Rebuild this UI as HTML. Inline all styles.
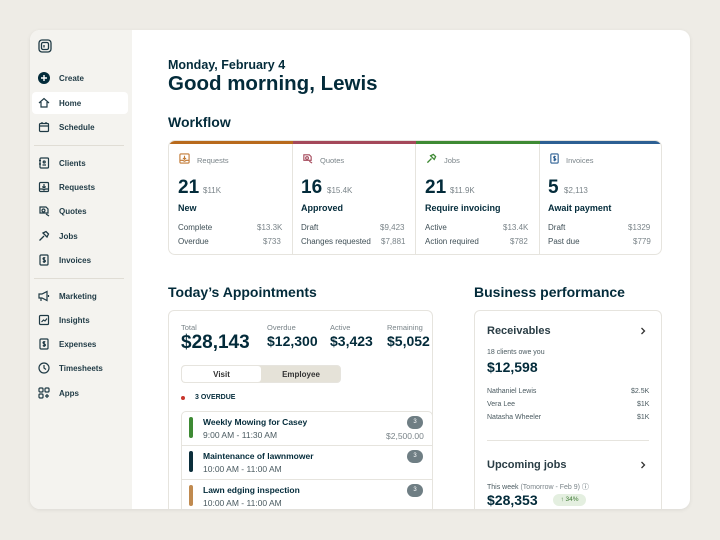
<!DOCTYPE html>
<html><head><meta charset="utf-8"><style>
*{margin:0;padding:0;box-sizing:border-box}
body{width:720px;height:540px;background:#eeece6;font-family:"Liberation Sans",sans-serif;color:#032b3a;position:relative;overflow:hidden}
.a{position:absolute;white-space:nowrap}
.win{position:absolute;left:30px;top:30px;width:660px;height:479px;background:#fff;border-radius:10px;overflow:hidden;box-shadow:0 1px 4px rgba(0,0,0,.08)}
.side{position:absolute;left:0;top:0;width:102px;height:100%;background:#f4f3ef}
.ni{position:absolute;left:29px;font-size:8px;font-weight:bold;color:#1f3a45}
.ic{position:absolute;left:8px;width:12px;height:12px}
.div{position:absolute;left:4px;width:90px;height:1px;background:#e0ddd5}
.g{color:#7a8489}
.b{font-weight:bold}
.cardrow{font-size:8px;color:#3f4f56}
.bd{position:absolute;left:377px;width:16px;height:13px;border-radius:7px;background:#6f7e84;color:#fff;font-size:6px;text-align:center;line-height:13px}
</style></head><body>
<div class="win">
 <div class="side">
  <svg class="a" style="left:8px;top:9px" width="14" height="14" viewBox="0 0 14 14" fill="none" stroke="#1f3a45" stroke-width="1.3"><rect x="1" y="1" width="12" height="12" rx="3"/><rect x="3.5" y="3.5" width="7" height="7" rx="1.5"/><path d="M6 6v2.5"/></svg>
  <div style="position:absolute;left:2px;top:62px;width:96px;height:22px;background:#fff;border-radius:4px"></div>
  <svg class="ic" style="top:42px" viewBox="0 0 12 12"><circle cx="6" cy="6" r="6" fill="#032b3a"/><path d="M6 3v6M3 6h6" stroke="#fff" stroke-width="1.4"/></svg>
  <div class="ni" style="top:44px">Create</div>
  <svg class="ic" style="top:67px" viewBox="0 0 12 12" fill="none" stroke="#1f3a45" stroke-width="1.2"><path d="M1 6L6 1.5 11 6M3 5v5h6V5"/></svg>
  <div class="ni" style="top:69px">Home</div>
  <svg class="ic" style="top:91px" viewBox="0 0 12 12" fill="none" stroke="#1f3a45" stroke-width="1.2"><rect x="1.5" y="2.5" width="9" height="8" rx="1"/><path d="M1.5 5h9M4 1v2M8 1v2"/></svg>
  <div class="ni" style="top:93px">Schedule</div>
  <div class="div" style="top:115px"></div>
  <svg class="ic" style="top:127px" viewBox="0 0 12 12" fill="none" stroke="#1f3a45" stroke-width="1.2"><rect x="2" y="1" width="8.5" height="10" rx="1"/><circle cx="6.2" cy="5" r="1"/><path d="M4.5 8h3.5M1 3.5h2M1 7h2"/></svg>
  <div class="ni" style="top:129px">Clients</div>
  <svg class="ic" style="top:151px" viewBox="0 0 12 12" fill="none" stroke="#1f3a45" stroke-width="1.2"><rect x="1.5" y="1.5" width="9" height="9" rx="1"/><path d="M6 3v4M4.3 5.5L6 7l1.7-1.5M1.5 8h3l1.5 1 1.5-1h3"/></svg>
  <div class="ni" style="top:153px">Requests</div>
  <svg class="ic" style="top:175px" viewBox="0 0 12 12" fill="none" stroke="#1f3a45" stroke-width="1.2"><path d="M2 2h6l2 2v4H2z"/><circle cx="5.5" cy="5.5" r="1.5"/><path d="M8 9l3 2"/></svg>
  <div class="ni" style="top:177px">Quotes</div>
  <svg class="ic" style="top:200px" viewBox="0 0 12 12" fill="none" stroke="#1f3a45" stroke-width="1.3"><path d="M1.5 10.5L6 6M5 3l3-1.5 2.5 2.5L9 7z"/></svg>
  <div class="ni" style="top:202px">Jobs</div>
  <svg class="ic" style="top:224px" viewBox="0 0 12 12" fill="none" stroke="#1f3a45" stroke-width="1.2"><rect x="2" y="1" width="8" height="10" rx="1"/><path d="M7.2 4.2C6.8 3.6 5 3.6 5 4.8s2.4.9 2.4 2.2S5.4 8 4.8 7.4M6.1 3v6"/></svg>
  <div class="ni" style="top:226px">Invoices</div>
  <div class="div" style="top:248px"></div>
  <svg class="ic" style="top:260px" viewBox="0 0 12 12" fill="none" stroke="#1f3a45" stroke-width="1.2"><path d="M1 4h3l5-2.5v9L4 8H1zM3 8v3M10.5 5v2"/></svg>
  <div class="ni" style="top:262px">Marketing</div>
  <svg class="ic" style="top:284px" viewBox="0 0 12 12" fill="none" stroke="#1f3a45" stroke-width="1.2"><rect x="1.5" y="1.5" width="9" height="9" rx="1"/><path d="M3.5 8l2-2 1.5 1 2-2.5"/></svg>
  <div class="ni" style="top:286px">Insights</div>
  <svg class="ic" style="top:308px" viewBox="0 0 12 12" fill="none" stroke="#1f3a45" stroke-width="1.2"><rect x="2" y="1" width="8" height="10" rx="1"/><path d="M7.2 4.2C6.8 3.6 5 3.6 5 4.8s2.4.9 2.4 2.2S5.4 8 4.8 7.4M6.1 3v6"/></svg>
  <div class="ni" style="top:310px">Expenses</div>
  <svg class="ic" style="top:332px" viewBox="0 0 12 12" fill="none" stroke="#1f3a45" stroke-width="1.2"><circle cx="6" cy="6" r="5"/><path d="M6 3v3l2 1.5"/></svg>
  <div class="ni" style="top:334px">Timesheets</div>
  <svg class="ic" style="top:357px" viewBox="0 0 12 12" fill="none" stroke="#1f3a45" stroke-width="1.2"><rect x="1" y="1" width="4" height="4" rx="1"/><rect x="7" y="1" width="4" height="4" rx="1"/><rect x="1" y="7" width="4" height="4" rx="1"/><path d="M9 7v4M7 9h4"/></svg>
  <div class="ni" style="top:359px">Apps</div>
 </div>

 <div class="a b" style="left:138px;top:28px;font-size:12.5px">Monday, February 4</div>
 <div class="a b" style="left:138px;top:42px;font-size:20.5px">Good morning, Lewis</div>
 <div class="a b" style="left:138px;top:84px;font-size:14px">Workflow</div>

 <div style="position:absolute;left:138px;top:110px;width:494px;height:115px;border:1px solid #e6e4de;border-radius:7px;overflow:hidden">
  <div style="position:absolute;top:0;left:0;width:124px;height:3px;background:#b86a1c"></div>
  <div style="position:absolute;top:0;left:124px;width:123px;height:3px;background:#a4485a"></div>
  <div style="position:absolute;top:0;left:247px;width:124px;height:3px;background:#3e8a34"></div>
  <div style="position:absolute;top:0;left:371px;width:123px;height:3px;background:#2c5f93"></div>
  <div style="position:absolute;top:3px;left:123px;width:1px;height:112px;background:#e6e4de"></div>
  <div style="position:absolute;top:3px;left:246px;width:1px;height:112px;background:#e6e4de"></div>
  <div style="position:absolute;top:3px;left:370px;width:1px;height:112px;background:#e6e4de"></div>
 </div>
 <svg class="a" style="left:149px;top:123px" width="11" height="11" viewBox="0 0 12 12" fill="none" stroke="#c27a35" stroke-width="1.2"><rect x="1" y="1" width="10" height="10" rx="1"/><path d="M6 3v4M4.3 5.5L6 7l1.7-1.5M1 8h3l2 1 2-1h3"/></svg>
 <div class="a g" style="left:167px;top:126px;font-size:7.5px">Requests</div>
 <svg class="a" style="left:272px;top:123px" width="11" height="11" viewBox="0 0 12 12" fill="none" stroke="#a4485a" stroke-width="1.2"><path d="M2 2h6l2 2v4H2z"/><circle cx="5.5" cy="5.5" r="1.5"/><path d="M8 9l3 2"/></svg>
 <div class="a g" style="left:290px;top:126px;font-size:7.5px">Quotes</div>
 <svg class="a" style="left:396px;top:123px" width="11" height="11" viewBox="0 0 12 12" fill="none" stroke="#3e8a34" stroke-width="1.4"><path d="M1.5 10.5L6 6M5 3l3-1.5 2.5 2.5L9 7z"/></svg>
 <div class="a g" style="left:414px;top:126px;font-size:7.5px">Jobs</div>
 <svg class="a" style="left:519px;top:123px" width="11" height="11" viewBox="0 0 12 12" fill="none" stroke="#2c5f93" stroke-width="1.2"><rect x="2" y="1" width="8" height="10" rx="1"/><path d="M7.2 4.2C6.8 3.6 5 3.6 5 4.8s2.4.9 2.4 2.2S5.4 8 4.8 7.4M6.1 3v6"/></svg>
 <div class="a g" style="left:536px;top:126px;font-size:7.5px">Invoices</div>

 <div class="a b" style="left:148px;top:147px;font-size:19px">21</div><div class="a g" style="left:173px;top:156px;font-size:8px">$11K</div>
 <div class="a b" style="left:271px;top:147px;font-size:19px">16</div><div class="a g" style="left:297px;top:156px;font-size:8px">$15.4K</div>
 <div class="a b" style="left:395px;top:147px;font-size:19px">21</div><div class="a g" style="left:420px;top:156px;font-size:8px">$11.9K</div>
 <div class="a b" style="left:518px;top:147px;font-size:19px">5</div><div class="a g" style="left:534px;top:156px;font-size:8px">$2,113</div>

 <div class="a b" style="left:148px;top:173px;font-size:9px">New</div>
 <div class="a b" style="left:271px;top:173px;font-size:9px">Approved</div>
 <div class="a b" style="left:395px;top:173px;font-size:9px">Require invoicing</div>
 <div class="a b" style="left:518px;top:173px;font-size:9px">Await payment</div>

 <div class="a cardrow" style="left:148px;top:193px">Complete</div><div class="a g" style="left:227px;top:193px;font-size:8px">$13.3K</div>
 <div class="a cardrow" style="left:148px;top:207px">Overdue</div><div class="a g" style="left:233px;top:207px;font-size:8px">$733</div>
 <div class="a cardrow" style="left:271px;top:193px">Draft</div><div class="a g" style="left:350px;top:193px;font-size:8px">$9,423</div>
 <div class="a cardrow" style="left:271px;top:207px">Changes requested</div><div class="a g" style="left:351px;top:207px;font-size:8px">$7,881</div>
 <div class="a cardrow" style="left:395px;top:193px">Active</div><div class="a g" style="left:473px;top:193px;font-size:8px">$13.4K</div>
 <div class="a cardrow" style="left:395px;top:207px">Action required</div><div class="a g" style="left:480px;top:207px;font-size:8px">$782</div>
 <div class="a cardrow" style="left:518px;top:193px">Draft</div><div class="a g" style="left:598px;top:193px;font-size:8px">$1329</div>
 <div class="a cardrow" style="left:518px;top:207px">Past due</div><div class="a g" style="left:603px;top:207px;font-size:8px">$779</div>

 <div class="a b" style="left:138px;top:254px;font-size:14px">Today’s Appointments</div>
 <div class="a b" style="left:444px;top:254px;font-size:14px">Business performance</div>

 <div style="position:absolute;left:138px;top:280px;width:265px;height:220px;border:1px solid #e6e4de;border-radius:6px"></div>
 <div class="a g" style="left:151px;top:293px;font-size:7.5px">Total</div>
 <div class="a b" style="left:151px;top:302px;font-size:19px">$28,143</div>
 <div class="a g" style="left:237px;top:293px;font-size:7.5px">Overdue</div>
 <div class="a b" style="left:237px;top:303px;font-size:14px">$12,300</div>
 <div class="a g" style="left:300px;top:293px;font-size:7.5px">Active</div>
 <div class="a b" style="left:300px;top:303px;font-size:14px">$3,423</div>
 <div class="a g" style="left:357px;top:293px;font-size:7.5px">Remaining</div>
 <div class="a b" style="left:357px;top:303px;font-size:14px">$5,052</div>
 <div style="position:absolute;left:151px;top:335px;width:160px;height:18px;border:1px solid #e6e4de;border-radius:4px;background:#e5e2d8;overflow:hidden">
  <div style="position:absolute;left:0;top:0;width:79px;height:16px;background:#fff;border-radius:3px"></div>
  <div class="a b" style="left:0;width:79px;top:4px;text-align:center;font-size:8px;color:#333">Visit</div>
  <div class="a b" style="left:79px;width:80px;top:4px;text-align:center;font-size:8px;color:#333">Employee</div>
 </div>
 <div style="position:absolute;left:151px;top:366px;width:4px;height:4px;border-radius:50%;background:#c8362d"></div>
 <div class="a b" style="left:165px;top:364px;font-size:7px">3 OVERDUE</div>
 <div style="position:absolute;left:151px;top:381px;width:252px;height:110px;border:1px solid #e6e4de;border-radius:5px;overflow:hidden">
  <div style="position:absolute;left:0;top:33px;width:100%;height:1px;background:#e6e4de"></div>
  <div style="position:absolute;left:0;top:67px;width:100%;height:1px;background:#e6e4de"></div>
 </div>
 <div style="position:absolute;left:159px;top:387px;width:4px;height:21px;border-radius:2px;background:#3e8a34"></div>
 <div style="position:absolute;left:159px;top:421px;width:4px;height:21px;border-radius:2px;background:#0b2e3b"></div>
 <div style="position:absolute;left:159px;top:455px;width:4px;height:21px;border-radius:2px;background:#c08a4f"></div>
 <div class="a b" style="left:173px;top:387px;font-size:8.5px">Weekly Mowing for Casey</div>
 <div class="a" style="left:173px;top:400px;font-size:8.5px;color:#4a5a60">9:00 AM - 11:30 AM</div>
 <div class="a b" style="left:173px;top:421px;font-size:8.5px">Maintenance of lawnmower</div>
 <div class="a" style="left:173px;top:434px;font-size:8.5px;color:#4a5a60">10:00 AM - 11:00 AM</div>
 <div class="a b" style="left:173px;top:455px;font-size:8.5px">Lawn edging inspection</div>
 <div class="a" style="left:173px;top:468px;font-size:8.5px;color:#4a5a60">10:00 AM - 11:00 AM</div>
 <div class="a g" style="left:356px;top:401px;font-size:8.5px">$2,500.00</div>
 <div class="bd" style="top:386px">3</div>
 <div class="bd" style="top:420px">3</div>
 <div class="bd" style="top:454px">3</div>

 <div style="position:absolute;left:444px;top:280px;width:188px;height:220px;border:1px solid #e6e4de;border-radius:6px"></div>
 <div class="a b" style="left:457px;top:295px;font-size:11px;color:#2a3d45">Receivables</div>
 <svg class="a" style="left:609px;top:297px" width="8" height="8" viewBox="0 0 8 8" fill="none" stroke="#333" stroke-width="1.3"><path d="M2.5 1l3 3-3 3"/></svg>
 <div class="a" style="left:457px;top:319px;font-size:7px;color:#4a5a60">18 clients owe you</div>
 <div class="a b" style="left:457px;top:329px;font-size:14px">$12,598</div>
 <div class="a" style="left:457px;top:358px;font-size:7px;color:#4a5a60">Nathaniel Lewis</div><div class="a" style="left:601px;top:358px;font-size:7px;color:#4a5a60">$2.5K</div>
 <div class="a" style="left:457px;top:371px;font-size:7px;color:#4a5a60">Vera Lee</div><div class="a" style="left:607px;top:371px;font-size:7px;color:#4a5a60">$1K</div>
 <div class="a" style="left:457px;top:384px;font-size:7px;color:#4a5a60">Natasha Wheeler</div><div class="a" style="left:607px;top:384px;font-size:7px;color:#4a5a60">$1K</div>
 <div style="position:absolute;left:457px;top:410px;width:162px;height:1px;background:#e6e4de"></div>
 <div class="a b" style="left:457px;top:429px;font-size:11px;color:#2a3d45">Upcoming jobs</div>
 <svg class="a" style="left:609px;top:431px" width="8" height="8" viewBox="0 0 8 8" fill="none" stroke="#333" stroke-width="1.3"><path d="M2.5 1l3 3-3 3"/></svg>
 <div class="a" style="left:457px;top:452px;font-size:7px;color:#4a5a60">This week <span class="g">(Tomorrow - Feb 9)</span> ⓘ</div>
 <div class="a b" style="left:457px;top:462px;font-size:14px">$28,353</div>
 <div style="position:absolute;left:523px;top:464px;width:33px;height:12px;border-radius:6px;background:#e4efe0;color:#3e7a34;font-size:6.5px;text-align:center;line-height:12px">↑ 34%</div>
</div>
</body></html>
